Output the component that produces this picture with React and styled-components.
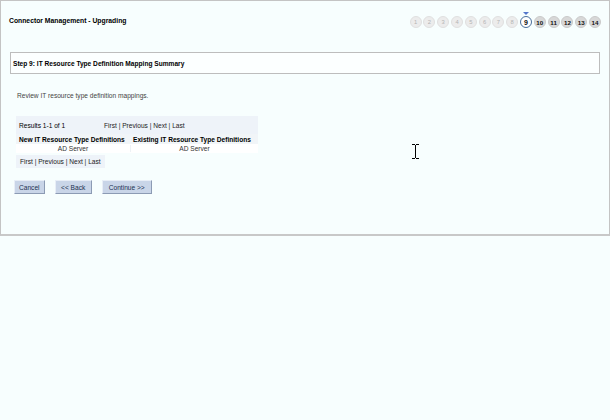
import React from 'react';
import styled, { createGlobalStyle } from 'styled-components';

const GlobalStyle = createGlobalStyle`
  html, body {
    margin: 0;
    padding: 0;
    background: #f7fefe;
  }
  body {
    font-family: Tahoma, "Liberation Sans", Arial, sans-serif;
    font-size: 6.6px;
    color: #000;
  }
`;

const Panel = styled.div`
  position: relative;
  box-sizing: border-box;
  width: 610px;
  height: 236px;
  padding: 0 9px 0 8px;
  border: 1px solid #c4c4c4;
  border-bottom: 2px solid #c8c8c8;
  background: #f7fefe;
`;

const Header = styled.div`
  display: flex;
  justify-content: space-between;
  align-items: center;
  height: 40px;
`;

const Title = styled.div`
  font-weight: bold;
  font-size: 6.8px;
  margin-top: -1px;
`;

const Steps = styled.div`
  display: flex;
  gap: 1.8px;
  margin-right: -1px;
  margin-top: 2px;
`;

const Step = styled.div`
  position: relative;
  box-sizing: border-box;
  width: 12px;
  height: 12px;
  border-radius: 50%;
  display: flex;
  align-items: center;
  justify-content: center;
  font-size: ${(p) => (p.$current ? '7px' : p.$done ? '5.8px' : '6.2px')};
  font-weight: ${(p) => (p.$done ? 'normal' : 'bold')};
  color: ${(p) => (p.$done ? '#b4b4b4' : '#111')};
  background: ${(p) =>
    p.$current ? '#fff' : p.$done ? '#ececec' : '#d8d8d8'};
  border: ${(p) =>
    p.$current ? '1.4px solid #4a6f9c' : p.$done ? '1px solid #e0e0e0' : '1px solid #cacaca'};
`;

const Marker = styled.span`
  position: absolute;
  top: -5px;
  left: 50%;
  transform: translateX(-50%);
  width: 0;
  height: 0;
  border-left: 3px solid transparent;
  border-right: 3px solid transparent;
  border-top: 3px solid #5577cc;
`;

const StepBox = styled.div`
  box-sizing: border-box;
  height: 22px;
  margin: 11px 0 0 1px;
  padding-left: 2px;
  display: flex;
  align-items: center;
  background: #fcffff;
  border: 1px solid #bdbdbd;
  font-weight: bold;
`;

const Content = styled.div`
  padding: 0 0 0 7px;
`;

const Intro = styled.p`
  margin: 18px 0 0 1px;
  color: #444;
`;

const ResultsTable = styled.div`
  width: 242px;
  margin-top: 17px;
  white-space: nowrap;
`;

const ResultsBar = styled.div`
  display: flex;
  align-items: center;
  height: 18px;
  padding-left: 3px;
  background: #eef3f9;
`;

const Count = styled.span`
  width: 85px;
`;

const Pager = styled.span`
  color: #222;
  white-space: nowrap;
  background: ${(p) => (p.$boxed ? '#eef3f9' : 'transparent')};
  padding: ${(p) => (p.$boxed ? '3px 4px' : '0')};
`;

const Row = styled.div`
  display: grid;
  grid-template-columns: 114px 1fr;
  height: ${(p) => (p.$head ? '10px' : '9px')};
  background: ${(p) => (p.$head ? '#f1f5f8' : '#fff')};
  font-weight: ${(p) => (p.$head ? 'bold' : 'normal')};
  align-items: center;
`;

const Cell = styled.div`
  padding-left: ${(p) => (p.$head ? '3px' : '0')};
  text-align: ${(p) => (p.$head ? 'left' : 'center')};
  border-left: ${(p) => (p.$split ? '1px solid #eef2f6' : 'none')};
  color: ${(p) => (p.$head ? '#000' : '#333')};
`;

const PagerRow = styled.div`
  margin-top: 2px;
  display: flex;
`;

const Buttons = styled.div`
  display: flex;
  gap: 10px;
  margin-top: 12px;
  margin-left: -2px;
`;

const Button = styled.button`
  box-sizing: border-box;
  height: 14px;
  padding: 0 ${(p) => p.$pad}px;
  font-family: inherit;
  font-size: 6.6px;
  color: #203050;
  background: #c9d5e8;
  border: 1px solid #e8eef7;
  border-right-color: #8c9bb4;
  border-bottom-color: #8c9bb4;
  cursor: pointer;
`;

const Cursor = styled.svg`
  position: absolute;
  left: 410px;
  top: 143px;
`;

const steps = Array.from({ length: 14 }, (_, i) => i + 1);

export default function App() {
  return (
    <>
      <GlobalStyle />
      <Panel>
        <Header>
          <Title>Connector Management - Upgrading</Title>
          <Steps>
            {steps.map((n) => (
              <Step key={n} $done={n < 9} $current={n === 9}>
                {n === 9 && <Marker />}
                {n}
              </Step>
            ))}
          </Steps>
        </Header>
        <StepBox>Step 9: IT Resource Type Definition Mapping Summary</StepBox>
        <Content>
          <Intro>Review IT resource type definition mappings.</Intro>
          <ResultsTable>
            <ResultsBar>
              <Count>Results 1-1 of 1</Count>
              <Pager>First | Previous | Next | Last</Pager>
            </ResultsBar>
            <Row $head>
              <Cell $head>New IT Resource Type Definitions</Cell>
              <Cell $head>Existing IT Resource Type Definitions</Cell>
            </Row>
            <Row>
              <Cell>AD Server</Cell>
              <Cell $split>AD Server</Cell>
            </Row>
          </ResultsTable>
          <PagerRow>
            <Pager $boxed>First | Previous | Next | Last</Pager>
          </PagerRow>
          <Buttons>
            <Button $pad={4}>Cancel</Button>
            <Button $pad={5.5}>&lt;&lt; Back</Button>
            <Button $pad={6}>Continue &gt;&gt;</Button>
          </Buttons>
        </Content>
        <Cursor width="9" height="15" viewBox="0 0 9 15">
          <path d="M1 0.5h3M5 0.5h3M4.5 1v13M1 14.5h3M5 14.5h3" stroke="#000" strokeWidth="1" fill="none" />
        </Cursor>
      </Panel>
    </>
  );
}
